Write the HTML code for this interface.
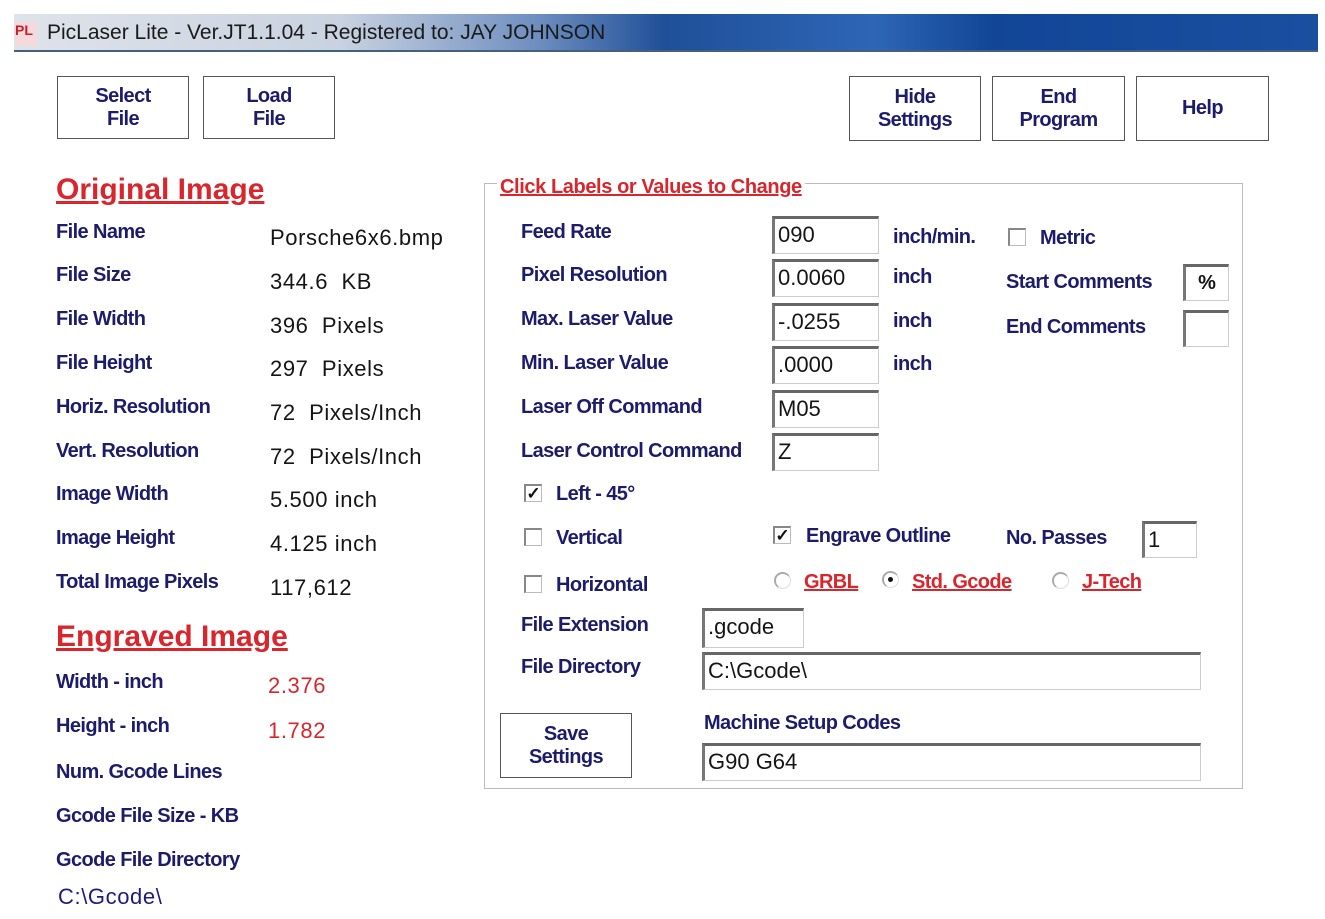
<!DOCTYPE html>
<html><head><meta charset="utf-8"><style>
*{margin:0;padding:0;box-sizing:border-box}
body{width:1325px;height:919px;background:#fff;position:relative;overflow:hidden;font-family:"Liberation Sans",sans-serif}
.a{position:absolute;white-space:nowrap;line-height:24px}
.lb{font-weight:bold;font-size:20px;color:#1c1c6b;letter-spacing:-0.6px}
.v{font-size:22px;color:#151515;letter-spacing:0.6px}
.r{color:#d8262c}
.h{font-weight:bold;font-size:30px;color:#d8262c;text-decoration:underline;letter-spacing:0;line-height:34px}
.btn{position:absolute;border:1.5px solid #555;background:#fff;display:flex;align-items:center;justify-content:center;text-align:center;font-weight:bold;font-size:20px;color:#1c1c6b;line-height:23px;letter-spacing:-0.6px}
.in{position:absolute;border:1px solid #ccc;border-top:3px solid #666;border-left:3px solid #777;background:#fff;font-size:22px;color:#151515;padding-left:3px;line-height:32px}
.cb{position:absolute;width:18px;height:18px;border:1px solid #bbb;border-top:2px solid #888;border-left:2px solid #888;background:#fff;font-size:17px;line-height:15px;color:#111;text-align:center;font-weight:bold}
.rd{position:absolute;width:17px;height:17px;border-radius:50%;border:1px solid #ddd;border-top:2px solid #aaa;border-left:2px solid #aaa;background:#fff}
</style></head><body>
<div style="position:absolute;left:14px;top:14px;width:1304px;height:38px;background:linear-gradient(90deg,#dfe3ea 0%,#c9d2e0 25%,#6f8fc0 40%,#1f4f98 50%,#2e66b6 66%,#124596 75%,#1a4fa0 100%);border-bottom:2px solid #455f7f"></div>
<div style="position:absolute;left:15px;top:22px;width:22px;height:24px;background:#f6d9dc;color:#c8202a;font-size:14px;font-weight:bold;line-height:16px">PL</div>
<div class="a" style="left:47px;top:21px;font-size:21px;color:#1a1a1a">PicLaser Lite - Ver.JT1.1.04 - Registered to: JAY JOHNSON</div>

<div class="btn" style="left:57px;top:76px;width:132px;height:63px">Select<br>File</div>
<div class="btn" style="left:203px;top:76px;width:132px;height:63px">Load<br>File</div>
<div class="btn" style="left:849px;top:76px;width:132px;height:65px">Hide<br>Settings</div>
<div class="btn" style="left:992px;top:76px;width:133px;height:65px">End<br>Program</div>
<div class="btn" style="left:1136px;top:76px;width:133px;height:65px">Help</div>

<div class="a h" style="left:56px;top:173px">Original Image</div>
<div class="a lb" style="left:56px;top:220px">File Name</div><div class="a v" style="left:270px;top:226px">Porsche6x6.bmp</div>
<div class="a lb" style="left:56px;top:263px">File Size</div><div class="a v" style="left:270px;top:270px">344.6&nbsp; KB</div>
<div class="a lb" style="left:56px;top:307px">File Width</div><div class="a v" style="left:270px;top:314px">396&nbsp; Pixels</div>
<div class="a lb" style="left:56px;top:351px">File Height</div><div class="a v" style="left:270px;top:357px">297&nbsp; Pixels</div>
<div class="a lb" style="left:56px;top:395px">Horiz. Resolution</div><div class="a v" style="left:270px;top:401px">72&nbsp; Pixels/Inch</div>
<div class="a lb" style="left:56px;top:439px">Vert. Resolution</div><div class="a v" style="left:270px;top:445px">72&nbsp; Pixels/Inch</div>
<div class="a lb" style="left:56px;top:482px">Image Width</div><div class="a v" style="left:270px;top:488px">5.500 inch</div>
<div class="a lb" style="left:56px;top:526px">Image Height</div><div class="a v" style="left:270px;top:532px">4.125 inch</div>
<div class="a lb" style="left:56px;top:570px">Total Image Pixels</div><div class="a v" style="left:270px;top:576px">117,612</div>

<div class="a h" style="left:56px;top:620px">Engraved Image</div>
<div class="a lb" style="left:56px;top:670px">Width - inch</div><div class="a v r" style="left:268px;top:674px">2.376</div>
<div class="a lb" style="left:56px;top:714px">Height - inch</div><div class="a v r" style="left:268px;top:719px">1.782</div>
<div class="a lb" style="left:56px;top:760px">Num. Gcode Lines</div>
<div class="a lb" style="left:56px;top:804px">Gcode File Size - KB</div>
<div class="a lb" style="left:56px;top:848px">Gcode File Directory</div>
<div class="a v" style="left:58px;top:885px;color:#1c1c80">C:\Gcode\</div>

<div style="position:absolute;left:484px;top:183px;width:759px;height:606px;border:1.5px solid #bbb"></div>
<div class="a" style="left:497px;top:175px;background:#fff;padding:0 3px;font-weight:bold;font-size:20px;color:#d8262c;text-decoration:underline;letter-spacing:-0.4px">Click Labels or Values to Change</div>

<div class="a lb" style="left:521px;top:220px">Feed Rate</div>
<div class="a lb" style="left:521px;top:263px">Pixel Resolution</div>
<div class="a lb" style="left:521px;top:307px">Max. Laser Value</div>
<div class="a lb" style="left:521px;top:351px">Min. Laser Value</div>
<div class="a lb" style="left:521px;top:395px">Laser Off Command</div>
<div class="a lb" style="left:521px;top:439px">Laser Control Command</div>
<div class="in" style="left:772px;top:216px;width:107px;height:38px">090</div>
<div class="in" style="left:772px;top:259px;width:107px;height:38px">0.0060</div>
<div class="in" style="left:772px;top:303px;width:107px;height:38px">-.0255</div>
<div class="in" style="left:772px;top:346px;width:107px;height:38px">.0000</div>
<div class="in" style="left:772px;top:390px;width:107px;height:38px">M05</div>
<div class="in" style="left:772px;top:433px;width:107px;height:38px">Z</div>
<div class="a lb" style="left:893px;top:225px">inch/min.</div>
<div class="a lb" style="left:893px;top:265px">inch</div>
<div class="a lb" style="left:893px;top:309px">inch</div>
<div class="a lb" style="left:893px;top:352px">inch</div>
<div class="cb" style="left:1008px;top:228px"></div>
<div class="a lb" style="left:1040px;top:226px">Metric</div>
<div class="a lb" style="left:1006px;top:270px">Start Comments</div>
<div class="in" style="left:1183px;top:264px;width:46px;height:37px;text-align:center;padding:0;font-weight:bold;font-size:20px">%</div>
<div class="a lb" style="left:1006px;top:315px">End Comments</div>
<div class="in" style="left:1183px;top:310px;width:46px;height:37px"></div>

<div class="cb" style="left:524px;top:484px">✓</div>
<div class="a lb" style="left:556px;top:482px">Left - 45°</div>
<div class="cb" style="left:524px;top:528px"></div>
<div class="a lb" style="left:556px;top:526px">Vertical</div>
<div class="cb" style="left:524px;top:575px"></div>
<div class="a lb" style="left:556px;top:573px">Horizontal</div>
<div class="cb" style="left:773px;top:526px">✓</div>
<div class="a lb" style="left:806px;top:524px">Engrave Outline</div>
<div class="a lb" style="left:1006px;top:526px">No. Passes</div>
<div class="in" style="left:1142px;top:521px;width:55px;height:37px">1</div>
<div class="rd" style="left:774px;top:572px"></div>
<div class="a lb r" style="left:804px;top:570px;text-decoration:underline;color:#d8262c">GRBL</div>
<div class="rd" style="left:882px;top:571px"><div style="position:absolute;left:4px;top:4px;width:5px;height:5px;border-radius:50%;background:#111"></div></div>
<div class="a lb" style="left:912px;top:570px;text-decoration:underline;color:#d8262c">Std. Gcode</div>
<div class="rd" style="left:1052px;top:572px"></div>
<div class="a lb" style="left:1082px;top:570px;text-decoration:underline;color:#d8262c">J-Tech</div>

<div class="a lb" style="left:521px;top:613px">File Extension</div>
<div class="in" style="left:702px;top:608px;width:102px;height:40px">.gcode</div>
<div class="a lb" style="left:521px;top:655px">File Directory</div>
<div class="in" style="left:702px;top:652px;width:499px;height:38px">C:\Gcode\</div>
<div class="btn" style="left:500px;top:713px;width:132px;height:65px">Save<br>Settings</div>
<div class="a lb" style="left:704px;top:711px">Machine Setup Codes</div>
<div class="in" style="left:702px;top:743px;width:499px;height:38px">G90 G64</div>
</body></html>
